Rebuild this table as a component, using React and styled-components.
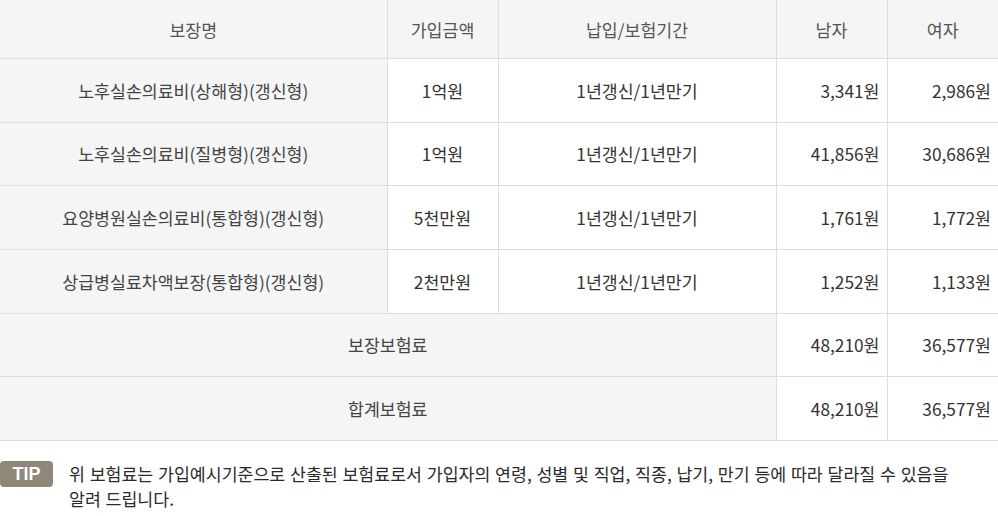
import React from "react";
import styled, { createGlobalStyle } from "styled-components";

const Global = createGlobalStyle`
  html, body { margin: 0; padding: 0; background: #fff; }
  body { font-family: "Noto Sans CJK KR", "Noto Sans", sans-serif; color: #333; }
`;

const Wrap = styled.div`
  width: 998px;
`;

const Table = styled.table`
  width: 998px;
  border-collapse: collapse;
  table-layout: fixed;
  font-size: 17.3px;
`;

const Th = styled.th`
  height: 58px;
  padding: 0;
  background: #f5f5f5;
  color: #555;
  font-weight: 400;
  text-align: center;
  border-bottom: 1px solid #ddd;
  border-left: 1px solid #ddd;
  &:first-child { border-left: none; }
`;

const Td = styled.td`
  height: 62.67px;
  padding: 0 ${(p) => (p.$right ? "7px" : "0")} 0 0;
  background: ${(p) => (p.$gray ? "#f5f5f5" : "#fff")};
  color: ${(p) => (p.$gray ? "#444" : "#333")};
  text-align: ${(p) => (p.$right ? "right" : "center")};
  border-bottom: 1px solid #ddd;
  border-left: 1px solid #ddd;
  &:first-child { border-left: none; }
`;

const Tip = styled.div`
  display: flex;
  align-items: flex-start;
  gap: 16px;
  margin-top: 20px;
`;

const Badge = styled.span`
  flex: none;
  width: 53px;
  height: 26px;
  border-radius: 4px;
  background: #8f8778;
  color: #fff;
  font-family: "Liberation Sans", Arial, sans-serif;
  font-weight: 700;
  font-size: 18px;
  line-height: 26px;
  text-align: center;
`;

const TipText = styled.p`
  margin: 0;
  width: 880px;
  font-size: 17.3px;
  line-height: 25px;
  word-spacing: 0.9px;
  color: #2a2a2a;
  word-break: keep-all;
`;

const rows = [
  ["노후실손의료비(상해형)(갱신형)", "1억원", "3,341원", "2,986원"],
  ["노후실손의료비(질병형)(갱신형)", "1억원", "41,856원", "30,686원"],
  ["요양병원실손의료비(통합형)(갱신형)", "5천만원", "1,761원", "1,772원"],
  ["상급병실료차액보장(통합형)(갱신형)", "2천만원", "1,252원", "1,133원"],
];

export default function App() {
  return (
    <Wrap>
      <Global />
      <Table>
        <colgroup>
          <col style={{ width: 387 }} />
          <col style={{ width: 111 }} />
          <col style={{ width: 278 }} />
          <col style={{ width: 111 }} />
          <col style={{ width: 111 }} />
        </colgroup>
        <thead>
          <tr>
            <Th>보장명</Th>
            <Th>가입금액</Th>
            <Th>납입/보험기간</Th>
            <Th>남자</Th>
            <Th>여자</Th>
          </tr>
        </thead>
        <tbody>
          {rows.map((r) => (
            <tr key={r[0]}>
              <Td $gray>{r[0]}</Td>
              <Td>{r[1]}</Td>
              <Td>1년갱신/1년만기</Td>
              <Td $right>{r[2]}</Td>
              <Td $right>{r[3]}</Td>
            </tr>
          ))}
          <tr>
            <Td $gray colSpan={3}>보장보험료</Td>
            <Td $right>48,210원</Td>
            <Td $right>36,577원</Td>
          </tr>
          <tr>
            <Td $gray colSpan={3}>합계보험료</Td>
            <Td $right>48,210원</Td>
            <Td $right>36,577원</Td>
          </tr>
        </tbody>
      </Table>
      <Tip>
        <Badge>TIP</Badge>
        <TipText>
          위 보험료는 가입예시기준으로 산출된 보험료로서 가입자의 연령, 성별 및 직업, 직종, 납기, 만기 등에 따라 달라질 수 있음을 알려 드립니다.
        </TipText>
      </Tip>
    </Wrap>
  );
}
